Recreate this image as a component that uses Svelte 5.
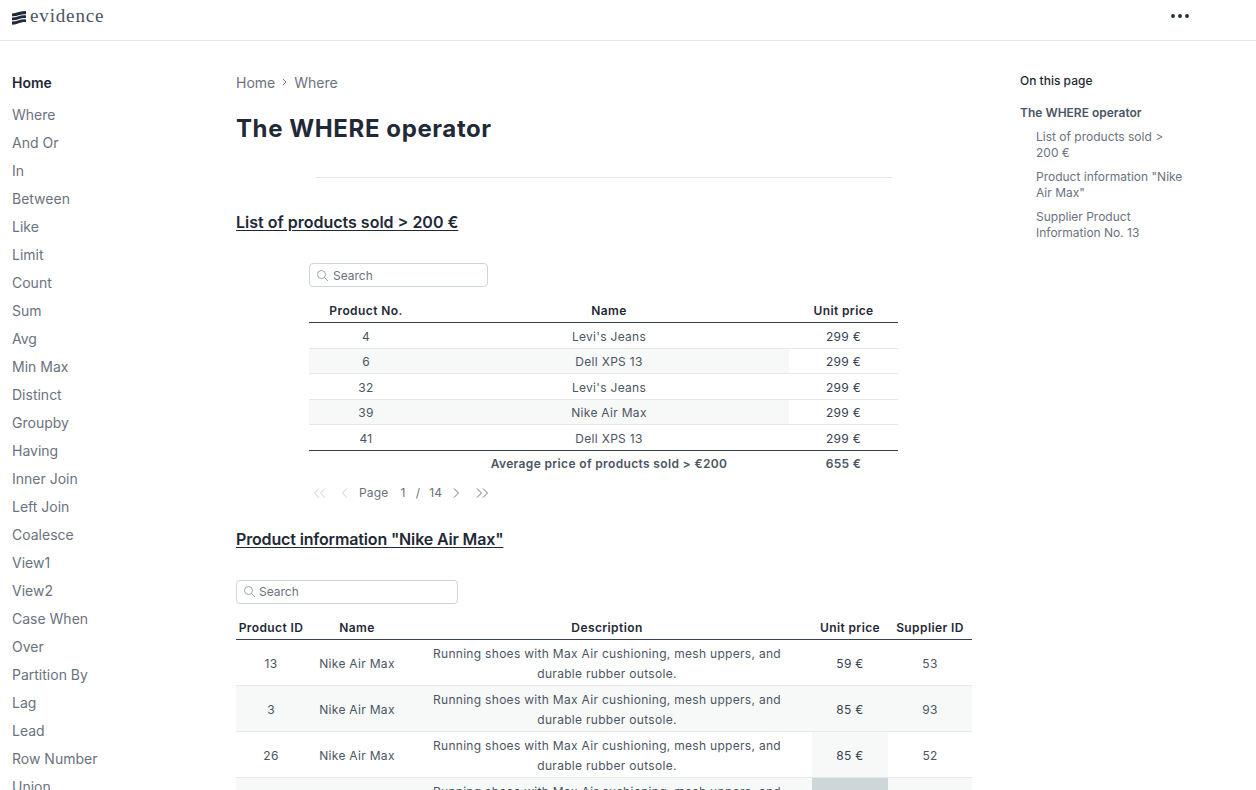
<script lang="ts">
	const navItems = [
		"Where", "And Or", "In", "Between", "Like", "Limit", "Count", "Sum", "Avg", "Min Max",
		"Distinct", "Groupby", "Having", "Inner Join", "Left Join", "Coalesce", "View1", "View2",
		"Case When", "Over", "Partition By", "Lag", "Lead", "Row Number", "Union"
	];

	const soldRows = [
		{ id: 4, name: "Levi's Jeans", price: "299 €" },
		{ id: 6, name: "Dell XPS 13", price: "299 €" },
		{ id: 32, name: "Levi's Jeans", price: "299 €" },
		{ id: 39, name: "Nike Air Max", price: "299 €" },
		{ id: 41, name: "Dell XPS 13", price: "299 €" }
	];

	const nikeRows = [
		{ id: 13, price: "59 €", supplier: 53, tint: "" },
		{ id: 3, price: "85 €", supplier: 93, tint: "" },
		{ id: 26, price: "85 €", supplier: 52, tint: "#f7f9f9" },
		{ id: "", price: "", supplier: "", tint: "#cdd6d9" }
	];

	const description = "Running shoes with Max Air cushioning, mesh uppers, and durable rubber outsole.";
</script>

<div class="page">
	<header class="topbar">
		<div class="logo">
			<svg width="14" height="14" viewBox="0 0 14 14" aria-hidden="true">
				<path d="M0 2.6 C4 2.8 8 -0.4 14 0.2 V3.2 C8 2.8 5 5.8 0 5.2Z" />
				<path d="M0 6.6 C4 6.8 8 3.8 14 4.4 V7 C8 6.6 5 9.6 0 9.2Z" />
				<path d="M0 10.6 C4 10.8 8 8 14 8.4 V11 C8 10.6 5 14 0 13.6Z" />
			</svg>
			<span class="wordmark">evidence</span>
		</div>
		<svg class="dots" width="18" height="4" viewBox="0 0 18 4" aria-hidden="true">
			<circle cx="2" cy="2" r="1.9" />
			<circle cx="9" cy="2" r="1.9" />
			<circle cx="16" cy="2" r="1.9" />
		</svg>
	</header>

	<div class="layout">
		<nav class="sidebar">
			<div class="nav-home">Home</div>
			<ul>
				{#each navItems as item}
					<li>{item}</li>
				{/each}
			</ul>
		</nav>

		<main>
			<div class="breadcrumb">
				<span>Home</span>
				<svg width="9" height="8" viewBox="0 0 9 8" aria-hidden="true"><path d="M3 1 L6 4 L3 7" /></svg>
				<span>Where</span>
			</div>
			<h1>The WHERE operator</h1>
			<hr />

			<h2>List of products sold &gt; 200 €</h2>
			<section class="table-one">
				<div class="search one">
					<svg width="13" height="13" viewBox="0 0 13 13" aria-hidden="true"><circle cx="5.5" cy="5.5" r="4" /><path d="M8.5 8.5 L12 12" /></svg>
					<span>Search</span>
				</div>
				<table>
					<colgroup><col style="width:120px" /><col style="width:360px" /><col style="width:109px" /></colgroup>
					<thead>
						<tr><th class="first">Product No.</th><th>Name</th><th>Unit price</th></tr>
					</thead>
					<tbody>
						{#each soldRows as row}
							<tr>
								<td class="first">{row.id}</td>
								<td>{row.name}</td>
								<td class="plain">{row.price}</td>
							</tr>
						{/each}
					</tbody>
					<tfoot>
						<tr>
							<td></td>
							<td>Average price of products sold &gt; €200</td>
							<td>655 €</td>
						</tr>
					</tfoot>
				</table>
				<div class="pager">
					<svg class="off wide" width="14" height="10" viewBox="0 0 14 10" aria-hidden="true"><path d="M6 0.5 L1.5 5 L6 9.5 M12 0.5 L7.5 5 L12 9.5" /></svg>
					<svg class="off" width="8" height="10" viewBox="0 0 8 10" aria-hidden="true"><path d="M6 0.5 L1.5 5 L6 9.5" /></svg>
					<span class="page-word">Page</span>
					<span class="page-num">1</span>
					<span>/</span>
					<span>14</span>
					<svg width="8" height="10" viewBox="0 0 8 10" aria-hidden="true"><path d="M2 0.5 L6.5 5 L2 9.5" /></svg>
					<svg class="wide-right" width="14" height="10" viewBox="0 0 14 10" aria-hidden="true"><path d="M2 0.5 L6.5 5 L2 9.5 M8 0.5 L12.5 5 L8 9.5" /></svg>
				</div>
			</section>

			<h2 class="second">Product information "Nike Air Max"</h2>
			<div class="search two">
				<svg width="13" height="13" viewBox="0 0 13 13" aria-hidden="true"><circle cx="5.5" cy="5.5" r="4" /><path d="M8.5 8.5 L12 12" /></svg>
				<span>Search</span>
			</div>
			<table class="table-two">
				<colgroup><col style="width:70px" /><col style="width:102px" /><col style="width:404px" /><col style="width:76px" /><col style="width:84px" /></colgroup>
				<thead>
					<tr><th>Product ID</th><th>Name</th><th class="desc">Description</th><th>Unit price</th><th>Supplier ID</th></tr>
				</thead>
				<tbody>
					{#each nikeRows as row}
						<tr>
							<td>{row.id}</td>
							<td>{row.id === "" ? "" : "Nike Air Max"}</td>
							<td class="desc">{description}</td>
							<td class="price" style:background-color={row.tint || null}>{row.price}</td>
							<td>{row.supplier}</td>
						</tr>
					{/each}
				</tbody>
			</table>
		</main>

		<aside class="toc">
			<div class="toc-title">On this page</div>
			<div class="toc-top">The WHERE operator</div>
			<ul>
				<li>List of products sold &gt; 200 €</li>
				<li>Product information "Nike Air Max"</li>
				<li>Supplier Product Information No. 13</li>
			</ul>
		</aside>
	</div>
</div>

<style>
	:global(body) {
		background: #fff;
		font-family: Inter, "Liberation Sans", sans-serif;
		color: #4b5563;
	}

	.page {
		height: 790px;
		overflow: hidden;
	}

	.topbar {
		height: 40px;
		border-bottom: 1px solid #e5e7eb;
		display: flex;
		justify-content: space-between;
		align-items: flex-start;
		padding-left: 12px;
		padding-right: 67px;
	}

	.logo {
		display: flex;
		align-items: center;
		gap: 4px;
		padding-top: 7px;
		height: 18px;
	}

	.logo svg {
		margin-top: 4px;
		fill: #1f2937;
	}

	.wordmark {
		font-family: "Liberation Serif", serif;
		font-size: 19px;
		letter-spacing: 0.85px;
		color: #4b5563;
		line-height: 18px;
	}

	.dots {
		margin-top: 14px;
		fill: #1f2937;
	}

	.layout {
		display: flex;
		align-items: flex-start;
	}

	.sidebar {
		width: 224px;
		padding-left: 12px;
		padding-top: 32px;
		flex: none;
		font-size: 14px;
	}

	.nav-home {
		font-weight: 600;
		color: #1f2937;
		line-height: 20px;
		margin-bottom: 8px;
	}

	.sidebar ul,
	.toc ul {
		list-style: none;
		margin: 0;
		padding: 0;
	}

	.sidebar li {
		height: 28px;
		line-height: 20px;
		padding-top: 4px;
		box-sizing: border-box;
		color: #6b7280;
	}

	main {
		width: 736px;
		flex: none;
		padding-top: 31px;
	}

	.breadcrumb {
		display: flex;
		align-items: center;
		gap: 5px;
		height: 20px;
		font-size: 14px;
		color: #6b7280;
	}

	.breadcrumb svg path {
		fill: none;
		stroke: #6b7280;
		stroke-width: 1;
	}

	h1 {
		margin: 0;
		margin-top: 21px;
		font-size: 24px;
		line-height: 32px;
		font-weight: 700;
		letter-spacing: 0.6px;
		color: #1f2937;
	}

	hr {
		width: 576px;
		margin: 32px 0 0 80px;
		border: none;
		border-top: 1px solid #e5e7eb;
	}

	h2 {
		margin: 33px 0 0;
		font-size: 16px;
		line-height: 22px;
		font-weight: 600;
		color: #1f2937;
		text-decoration: underline;
		text-underline-offset: 2px;
	}

	h2.second {
		margin-top: 25px;
		letter-spacing: -0.15px;
	}

	.table-one {
		margin-left: 73px;
		width: 589px;
		margin-top: 30px;
	}

	.search {
		box-sizing: border-box;
		height: 24px;
		border: 1px solid #ccd5d8;
		border-radius: 4px;
		display: flex;
		align-items: center;
		gap: 3px;
		padding-left: 6px;
		font-size: 12px;
		color: #6b7280;
	}

	.search svg {
		fill: none;
		stroke: #9ca3af;
		stroke-width: 1;
	}

	.search.one {
		width: 179px;
		gap: 4px;
	}

	.search.two {
		width: 222px;
		margin-top: 30px;
	}

	table {
		table-layout: fixed;
		border-collapse: collapse;
		width: 100%;
		font-size: 12px;
		letter-spacing: 0.3px;
		color: #4b5563;
	}

	th {
		font-weight: 600;
		color: #1f2937;
		text-align: center;
		padding: 0 0 3px;
		height: 23px;
		line-height: 16px;
		vertical-align: bottom;
		border-bottom: 1px solid #374151;
		box-sizing: border-box;
		letter-spacing: 0.4px;
	}

	td {
		text-align: center;
		padding: 0;
		border-bottom: 1px solid #e5e7eb;
	}

	.table-one table {
		margin-top: 11px;
	}

	.table-one th {
		height: 24px;
	}

	.table-one tbody td {
		height: 26px;
		box-sizing: border-box;
		padding-top: 2px;
	}

	.table-one tbody tr:nth-child(even) td {
		height: 25px;
	}

	.table-one .first {
		padding-right: 6px;
	}

	tbody tr:nth-child(even) {
		background: #f7f9f9;
	}

	.table-one td.plain {
		background: #fff;
		color: #374151;
	}

	.table-one tbody tr:last-child td {
		border-bottom: 1px solid #374151;
	}

	.table-one tfoot td {
		height: 25px;
		font-weight: 600;
		color: #4b5563;
		border-bottom: none;
		letter-spacing: 0.35px;
	}

	.pager {
		display: flex;
		align-items: center;
		font-size: 12px;
		letter-spacing: 0.2px;
		color: #6b7280;
		height: 20px;
		margin-top: 7px;
		padding-left: 4px;
	}

	.pager svg {
		fill: none;
		stroke: #6b7280;
		stroke-width: 1;
	}

	.pager svg.off {
		stroke: #c7ccd3;
	}

	.pager svg.wide {
		margin-right: 14px;
	}

	.page-word {
		margin-left: 10px;
		margin-right: 12px;
	}

	.pager span:nth-of-type(3) {
		margin: 0 9px 0 10px;
	}

	.pager span:nth-of-type(4) {
		margin-right: 10px;
	}

	.pager svg.wide-right {
		margin-left: 15px;
	}

	.table-two {
		margin-top: 13px;
	}

	.table-two td {
		height: 46px;
		line-height: 20px;
		box-sizing: border-box;
		padding-top: 3px;
	}

	.table-two td.price {
		color: #374151;
	}

	.table-two th.desc {
		padding-right: 6px;
	}

	.table-two td.desc {
		padding-left: 20px;
		padding-right: 26px;
	}

	.toc {
		margin-left: 48px;
		width: 164px;
		flex: none;
		padding-top: 32px;
		font-size: 12px;
		line-height: 16px;
	}

	.toc-title {
		font-weight: 500;
		color: #1f2937;
	}

	.toc-top {
		margin-top: 16px;
		font-weight: 600;
		color: #4b5563;
	}

	.toc li {
		margin-top: 8px;
		padding-left: 16px;
		color: #6b7280;
	}
</style>
